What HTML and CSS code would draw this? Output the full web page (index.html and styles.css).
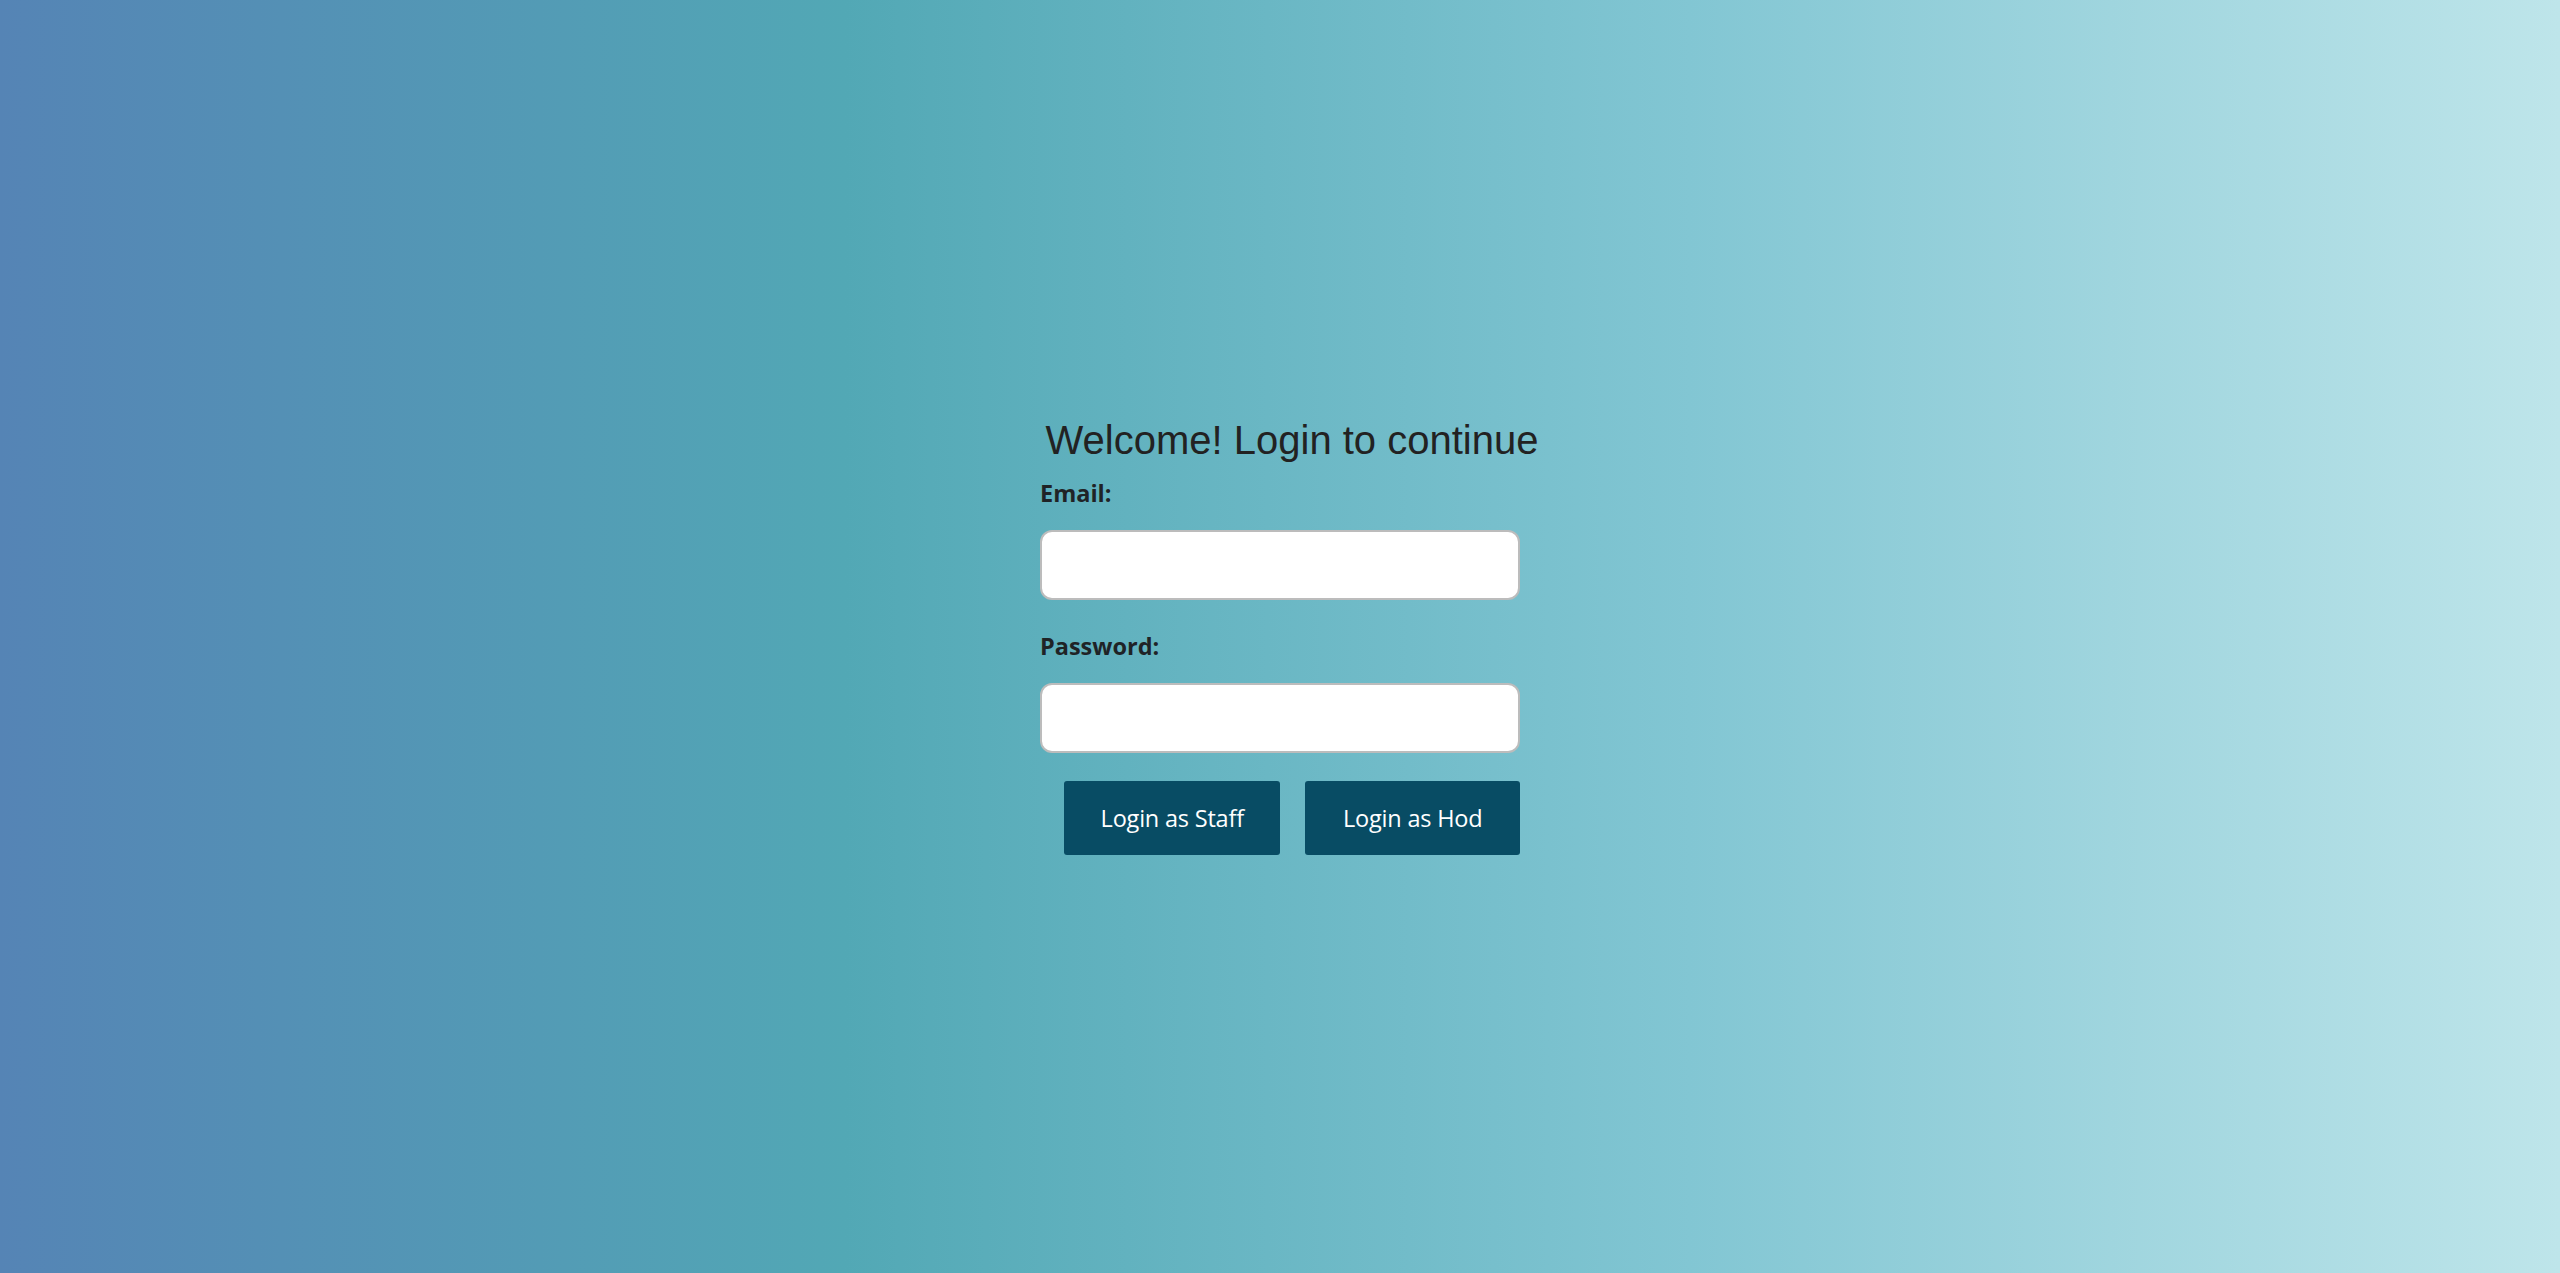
FILE: index.html
```html
<!DOCTYPE html>
<html lang="en">
<head>
<meta charset="utf-8">
<title>Login</title>
<link rel="stylesheet" href="styles.css">
</head>
<body>
<main class="page">
  <section class="login">
    <h2 class="login-title">Welcome! Login to continue</h2>
    <form class="login-form">
      <div class="field">
        <label class="field-label" for="email">Email:</label>
        <input class="field-input" id="email" type="email">
      </div>
      <div class="field">
        <label class="field-label" for="password">Password:</label>
        <input class="field-input" id="password" type="password">
      </div>
      <div class="actions">
        <button class="btn btn-staff" type="button">Login as Staff</button>
        <button class="btn btn-hod" type="button">Login as Hod</button>
      </div>
    </form>
  </section>
</main>
</body>
</html>
```

FILE: styles.css
```css
html, body {
  margin: 0;
  padding: 0;
  height: 100%;
}

body {
  background: linear-gradient(to right, #5584b5 0%, #52a8b5 33%, #82c6d3 66%, #bee5ea 100%);
  font-family: "Open Sans", "Noto Sans", sans-serif;
  color: #212529;
}

.page {
  height: 100vh;
  display: flex;
  align-items: center;
  justify-content: center;
}

.login {
  display: flex;
  flex-direction: column;
  align-items: center;
  transform: translateY(-1px);
}

.login-title {
  margin: 0;
  font-family: "Liberation Sans", Arial, sans-serif;
  font-weight: 400;
  font-size: 40px;
  line-height: 46px;
  color: #222;
  white-space: nowrap;
  padding-left: 24px;
}

.login-form {
  width: 480px;
  margin-top: 12px;
}

.field {
  display: flex;
  flex-direction: column;
  margin-bottom: 28px;
}

.field:last-of-type {
  margin-bottom: 24px;
}

.field-label {
  font-weight: 700;
  font-size: 23.5px;
  line-height: 36px;
  margin-bottom: 19px;
  color: #1f2326;
}

.field-input {
  box-sizing: border-box;
  height: 70px;
  width: 100%;
  border: 2px solid #bcbcbc;
  border-radius: 12px;
  background: #fff;
  outline: none;
  font-size: 22px;
  padding: 0 14px;
}

.actions {
  display: flex;
  gap: 25px;
  padding-left: 24px;
}

.btn {
  box-sizing: border-box;
  height: 74px;
  border: none;
  border-radius: 3px;
  background: #084c64;
  color: #fff;
  font-family: "Open Sans", "Noto Sans", sans-serif;
  font-size: 23.5px;
  letter-spacing: -0.2px;
  padding: 0;
  cursor: pointer;
}

.btn-staff {
  width: 217px;
}

.btn-hod {
  width: 215px;
}
```
